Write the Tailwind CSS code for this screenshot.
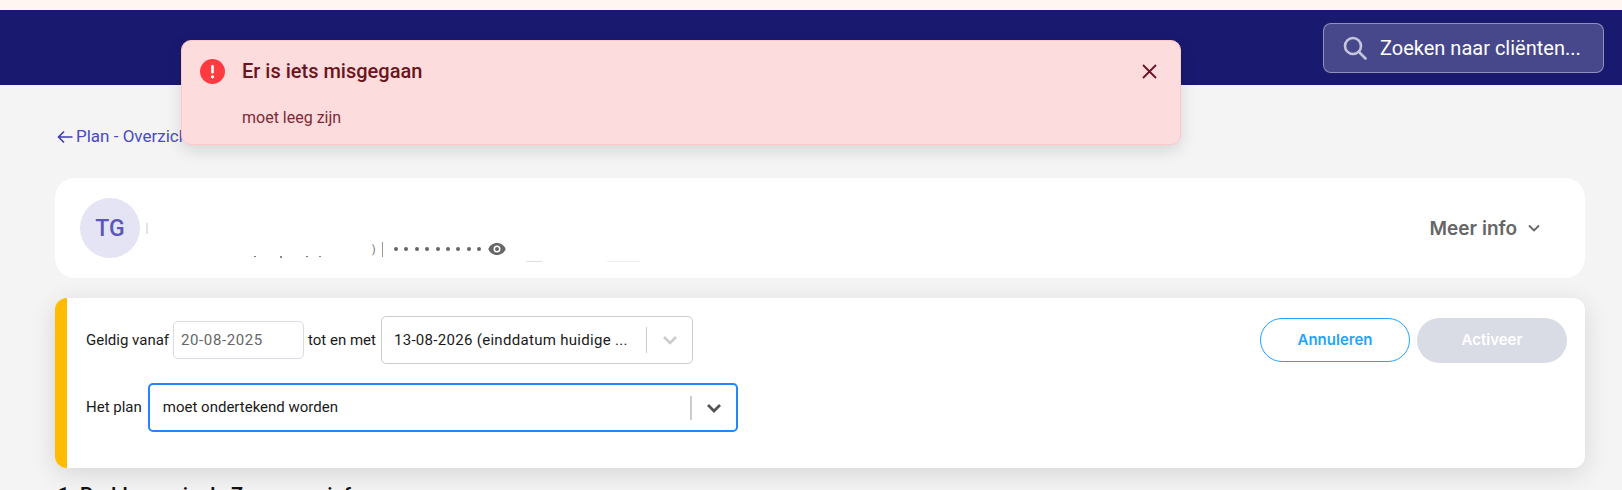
<!DOCTYPE html>
<html lang="nl">
<head>
    <meta charset="UTF-8">
    <meta name="viewport" content="width=device-width, initial-scale=1.0">
    <title>Plan - Overzicht</title>
    <script src="https://cdn.jsdelivr.net/npm/@tailwindcss/browser@4"></script>
</head>
<body class="bg-[#f4f4f4] font-['Roboto',sans-serif] h-[490px] overflow-hidden relative">
    <!-- Top strip -->
    <div class="h-[10px] bg-[#fff6f2]"></div>

    <!-- Navigation -->
    <nav class="h-[75px] bg-[#191970] flex justify-end items-start pt-[13px] pr-[18px]">
        <div class="w-[281px] h-[50px] rounded-lg border border-white/40 bg-white/20 flex items-center pl-[19px] gap-[13px]">
            <svg class="w-[24px] h-[24px] text-[#c5c5dc]" viewBox="0 0 24 24" fill="none" stroke="currentColor" stroke-width="2.6" stroke-linecap="round"><circle cx="10" cy="10" r="8"/><path d="M16 16l6.500 6.500"/></svg>
            <span class="text-white text-[20px] whitespace-nowrap">Zoeken naar cliënten...</span>
        </div>
    </nav>

    <!-- Error toast -->
    <div class="absolute left-[181px] top-[40px] w-[1000px] h-[105px] bg-[#fddcdd] border border-[#fcc8c8] rounded-[10px] shadow-[0_6px_16px_rgba(0,0,0,0.12)] text-[#6b1420]">
        <div class="flex items-center h-[60px] pl-[18px] pr-[23px]">
            <svg class="w-[25px] h-[25px] shrink-0" viewBox="0 0 25 25"><circle cx="12.5" cy="12.5" r="12.5" fill="#ff3b3f"/><rect x="11.2" y="6" width="2.6" height="8.5" rx="1" fill="#fff"/><circle cx="12.5" cy="17.8" r="1.6" fill="#fff"/></svg>
            <span class="ml-[17px] text-[20px] font-medium">Er is iets misgegaan</span>
            <svg class="ml-auto w-[15px] h-[15px]" viewBox="0 0 15 15" fill="none" stroke="currentColor" stroke-width="1.8"><path d="M1 1l13 13M14 1 1 14"/></svg>
        </div>
        <p class="ml-[60px] mt-[7px] text-[16px] leading-[20px] text-[#7c2a35]">moet leeg zijn</p>
    </div>

    <main class="pl-[55px] pr-[37px]">
        <!-- Breadcrumb -->
        <a class="flex items-center h-[22px] mt-[41px] text-[17px] text-[#4a4ac4] pl-[2px] gap-[3px]">
            <svg class="w-[16px] h-[14px]" viewBox="0 0 16 14" fill="none" stroke="#3c3cb0" stroke-width="1.6"><path d="M15.5 7H1.5M7 1.5 1.5 7 7 12.5"/></svg>
            <span>Plan - Overzicht</span>
        </a>

        <!-- Client card -->
        <section class="relative mt-[30px] h-[100px] bg-white rounded-[20px] flex items-center pl-[25px] pr-[44px]">
            <div class="w-[60px] h-[60px] pt-[2px] rounded-full bg-[#e5e4f5] flex items-center justify-center text-[23px] font-medium text-[#5b57b8]">TG</div>
            <div class="ml-[6px] w-[2px] h-[11px] bg-[#e4e4e4]"></div>
            <i class="absolute left-[199px] top-[78px] w-[2px] h-[1px] bg-[#777]"></i>
            <i class="absolute left-[225px] top-[78px] w-[2px] h-[2px] bg-[#888]"></i>
            <i class="absolute left-[251px] top-[78px] w-[2px] h-[1px] bg-[#777]"></i>
            <i class="absolute left-[264px] top-[78px] w-[2px] h-[1px] bg-[#888]"></i>
            <div class="absolute left-[317px] top-[63px] flex items-center h-[16px] text-[#666]">
                <span class="text-[10px] w-[10px]">)</span>
                <span class="w-[1px] h-[15px] bg-[#999]"></span>
                <span class="ml-[11px] flex gap-[6.400px]">
                    <i class="w-[4px] h-[4px] rounded-full bg-[#666]"></i><i class="w-[4px] h-[4px] rounded-full bg-[#666]"></i><i class="w-[4px] h-[4px] rounded-full bg-[#666]"></i><i class="w-[4px] h-[4px] rounded-full bg-[#666]"></i><i class="w-[4px] h-[4px] rounded-full bg-[#666]"></i><i class="w-[4px] h-[4px] rounded-full bg-[#666]"></i><i class="w-[4px] h-[4px] rounded-full bg-[#666]"></i><i class="w-[4px] h-[4px] rounded-full bg-[#666]"></i><i class="w-[4px] h-[4px] rounded-full bg-[#666]"></i>
                </span>
                <svg class="ml-[7px] w-[18px] h-[14px]" viewBox="0 0 18 14"><path fill="#666" fill-rule="evenodd" d="M9 1c4 0 7.300 2.500 8.700 6-1.400 3.500-4.700 6-8.700 6S1.700 10.500.3 7C1.700 3.500 5 1 9 1Zm0 2.500a3.500 3.500 0 1 0 0 7 3.500 3.500 0 0 0 0-7Zm0 1.500a2 2 0 1 1 0 4 2 2 0 0 1 0-4Z"/></svg>
            </div>
            <div class="absolute left-[471px] top-[83px] w-[16px] h-[1px] bg-[#ddd]"></div>
            <div class="absolute left-[552px] top-[83px] w-[33px] h-[1px] bg-[#eee]"></div>
            <div class="ml-auto flex items-center gap-[10px] text-[19px] font-semibold text-[#666] font-['Inter',sans-serif]">
                <span class="mt-[2px]">Meer info</span>
                <svg class="w-[14px] h-[9px]" viewBox="0 0 14 9" fill="none" stroke="#666" stroke-width="1.800"><path d="M2 1.500 7 6.500l5-5"/></svg>
            </div>
        </section>

        <!-- Plan form card -->
        <section class="mt-[20px] h-[170px] bg-white rounded-[12px] border-l-[12px] border-[#ffbb00] shadow-[0_6px_26px_rgba(0,0,0,0.12)] pl-[19px] pr-[18px] text-[15px] text-[#1a1a1a]">
            <div class="flex items-center justify-between h-[66px] pt-[18px]">
                <div class="flex items-center">
                    <span>Geldig vanaf</span>
                    <div class="ml-[4px] w-[131px] h-[38px] border border-[#d9dbe8] rounded-[5px] flex items-center pl-[7px] text-[#666] tracking-[0.6px]">20-08-2025</div>
                    <span class="ml-[4px]">tot en met</span>
                    <div class="ml-[5px] w-[312px] h-[48px] border border-[#cccccc] rounded-[5px] flex items-center pl-[12px]">
                        <span class="w-[252px] whitespace-nowrap overflow-hidden tracking-[0.3px]">13-08-2026 (einddatum huidige ...</span>
                        <span class="w-[1px] h-[26px] bg-[#ccc]"></span>
                        <svg class="ml-[15px] w-[16px] h-[10px]" viewBox="0 0 16 10" fill="none" stroke="#cccccc" stroke-width="2.600"><path d="M2 2l6 6 6-6"/></svg>
                    </div>
                </div>
                <div class="flex items-center gap-[7px]">
                    <button class="w-[150px] h-[44px] rounded-full border border-[#1fa5ff] text-[#1fa5ff] text-[15px] font-semibold font-['Inter',sans-serif]">Annuleren</button>
                    <button class="w-[150px] h-[45px] rounded-full bg-[#d9dbe5] text-white text-[15px] font-semibold font-['Inter',sans-serif]">Activeer</button>
                </div>
            </div>
            <div class="flex items-center mt-[19px]">
                <span>Het plan</span>
                <div class="ml-[6px] w-[590px] h-[49px] border-2 border-[#2684ff] rounded-[5px] flex items-center pl-[13px]">
                    <span class="w-[527px]">moet ondertekend worden</span>
                    <span class="w-[2px] h-[24px] bg-[#ccc]"></span>
                    <svg class="ml-[14px] w-[16px] h-[10px]" viewBox="0 0 16 10" fill="none" stroke="#555555" stroke-width="2.800"><path d="M2 2l6 6 6-6"/></svg>
                </div>
            </div>
        </section>

        <h2 class="mt-[15px] pl-[3px] text-[20px] font-semibold leading-[24px] text-[#111] whitespace-nowrap">1. Problemen in de Zorgvraag info</h2>
    </main>
</body>
</html>
